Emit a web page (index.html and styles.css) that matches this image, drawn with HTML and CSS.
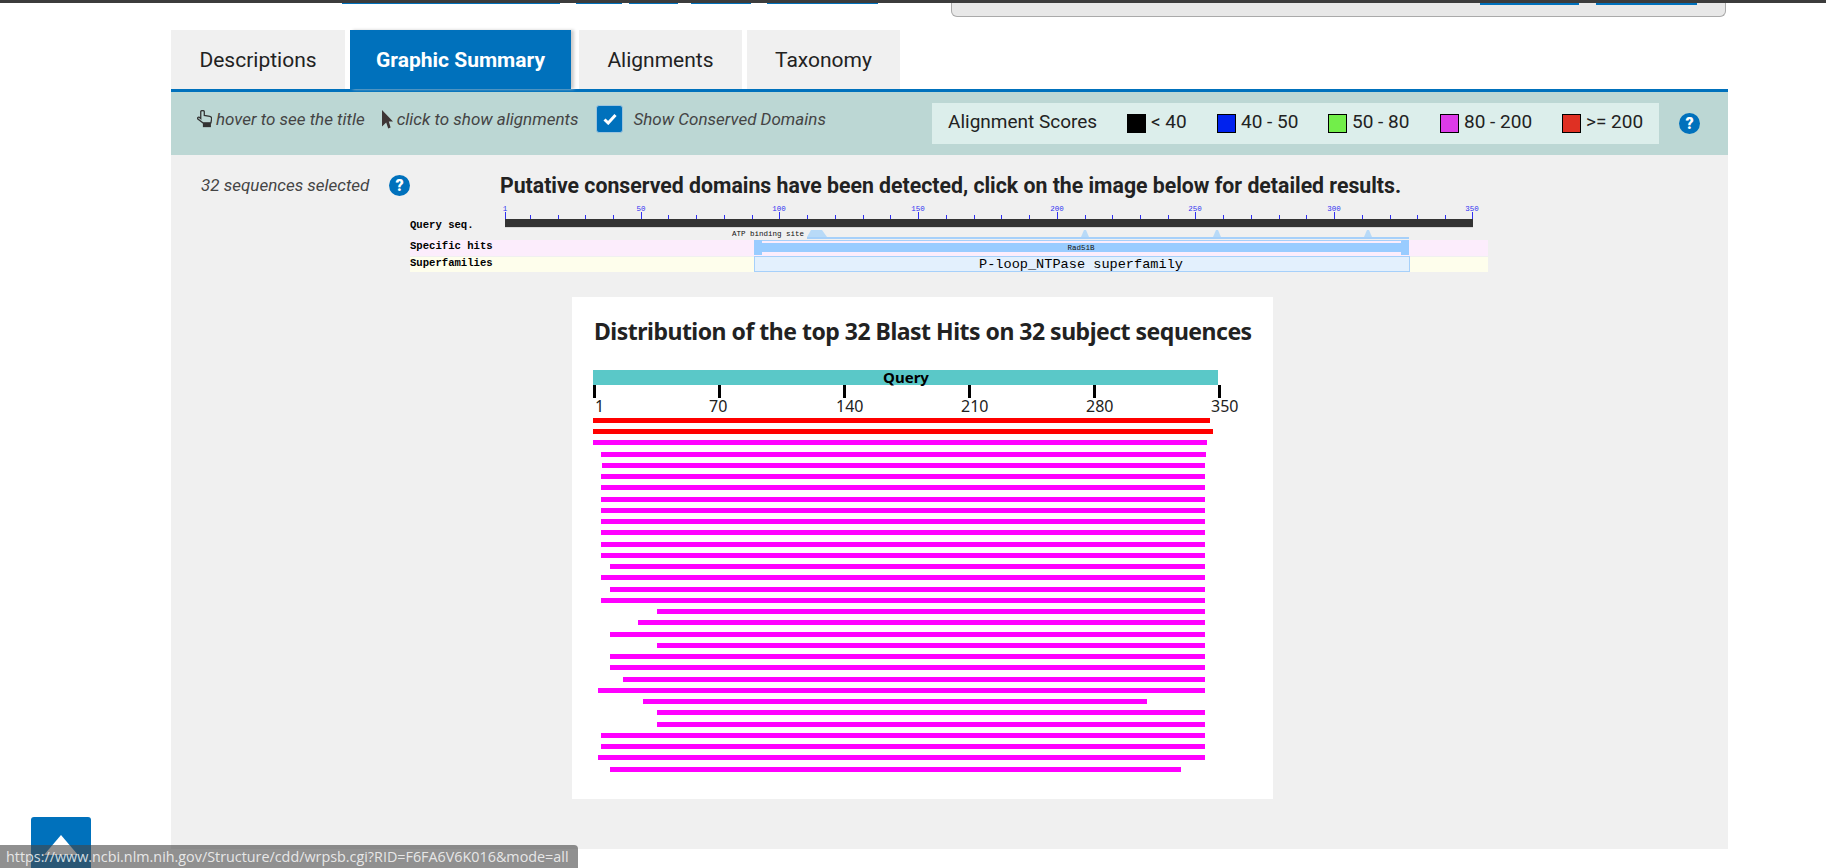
FILE: index.html
```html
<!DOCTYPE html>
<html>
  <head>
    <title>Graphic Summary</title>
    <link rel="stylesheet" href="styles.css">
  </head>
  <body>
    <header class="top">
      <div class="top-links">
        <span class="frag frag-a"></span>
        <span class="frag frag-b"></span>
        <span class="frag frag-c"></span>
        <span class="frag frag-d"></span>
        <span class="frag frag-e"></span>
      </div>
      <div class="top-box">
        <span class="frag frag-f"></span>
        <span class="frag frag-g"></span>
      </div>
    </header>

    <main class="results">
      <nav class="tabs">
        <a class="tab tab-desc" href="#">Descriptions</a>
        <a class="tab tab-graphic active" href="#">Graphic Summary</a>
        <a class="tab tab-align" href="#">Alignments</a>
        <a class="tab tab-tax" href="#">Taxonomy</a>
      </nav>

      <div class="toolbar">
        <div class="hints">
          <svg class="hand" width="15" height="18" viewBox="0 0 14 16.8">
            <path d="M3.5 8V1.5C3.5 .2 6.8 .2 6.8 1.5V5L12 6C13.4 6.3 13.8 7 13.6 8.5L13 12H5.5L.8 8.5C0 7.6 1 6.2 2.2 6.8Z" fill="none" stroke="#333" stroke-width="1.2"/>
            <rect x="5.5" y="12" width="7.5" height="4" fill="#333"/>
          </svg>
          <span class="hint hint-hover">hover to see the title</span>
          <svg class="arrow" width="11" height="19" viewBox="0 0 11 19">
            <path d="M0 0L11 11.5H6.8L8.6 17.5L6.2 18.6L4.2 12.6L0 16.5Z" fill="#3d3535"/>
          </svg>
          <span class="hint hint-click">click to show alignments</span>
          <span class="checkbox">
            <svg width="14" height="12" viewBox="0 0 14 12">
              <path d="M1.5 6.5L5.2 10L12.5 2" fill="none" stroke="#fff" stroke-width="3"/>
            </svg>
          </span>
          <span class="hint">Show Conserved Domains</span>
        </div>
        <div class="legend">
          <span class="legend-title">Alignment Scores</span>
          <span class="score score-first"><i class="swatch s-black"></i>&lt; 40</span>
          <span class="score"><i class="swatch s-blue"></i>40 - 50</span>
          <span class="score"><i class="swatch s-green"></i>50 - 80</span>
          <span class="score"><i class="swatch s-magenta"></i>80 - 200</span>
          <span class="score"><i class="swatch s-red"></i>&gt;= 200</span>
        </div>
        <span class="help help-legend">?</span>
      </div>

      <section class="summary">
        <div class="summary-head">
          <span class="selected">32 sequences selected</span>
          <span class="help help-selected">?</span>
          <h2 class="cdd-title">Putative conserved domains have been detected, click on the image below for detailed results.</h2>
        </div>

        <svg class="cdd" width="1100" height="75" viewBox="400 205 1100 75">
          <rect x="410" y="240" width="1078" height="16" fill="#fcedfc"/>
          <rect x="410" y="257" width="1078" height="15" fill="#fefeec"/>

          <rect x="505" y="227" width="968" height="1" fill="#d8d8d8"/>
          <rect x="505" y="219" width="968" height="8" fill="#333"/>
          <path class="tick" d="M505.5 212V219M530.5 215V219M558.5 215V219M585.5 215V219M613.5 215V219M641.5 212V219M668.5 215V219M696.5 215V219M724.5 215V219M752.5 215V219M779.5 212V219M807.5 215V219M835.5 215V219M863.5 215V219M890.5 215V219M918.5 212V219M946.5 215V219M974.5 215V219M1001.5 215V219M1029.5 215V219M1057.5 212V219M1085.5 215V219M1112.5 215V219M1140.5 215V219M1168.5 215V219M1195.5 212V219M1223.5 215V219M1251.5 215V219M1279.5 215V219M1306.5 215V219M1334.5 212V219M1362.5 215V219M1390.5 215V219M1417.5 215V219M1445.5 215V219M1472.5 212V219"/>
          <text class="ruler-num" x="505" y="211" text-anchor="middle">1</text>
          <text class="ruler-num" x="641" y="211" text-anchor="middle">50</text>
          <text class="ruler-num" x="779" y="211" text-anchor="middle">100</text>
          <text class="ruler-num" x="918" y="211" text-anchor="middle">150</text>
          <text class="ruler-num" x="1057" y="211" text-anchor="middle">200</text>
          <text class="ruler-num" x="1195" y="211" text-anchor="middle">250</text>
          <text class="ruler-num" x="1334" y="211" text-anchor="middle">300</text>
          <text class="ruler-num" x="1472" y="211" text-anchor="middle">350</text>

          <text class="cdd-label" x="410" y="228">Query seq.</text>
          <text class="cdd-label" x="410" y="249">Specific hits</text>
          <text class="cdd-label" x="410" y="266">Superfamilies</text>
          <text class="cdd-small" x="732" y="235.5">ATP binding site</text>

          <path class="site" d="M807 237L811 230H822L827 237Z"/>
          <path class="site" d="M1081 237L1084 230H1086L1089 237Z"/>
          <path class="site" d="M1213 237L1216 230H1218L1221 237Z"/>
          <path class="site" d="M1364 237L1367 230H1369L1372 237Z"/>
          <rect x="807" y="237" width="602" height="2" fill="#a6d0fa"/>

          <rect x="754" y="240" width="8" height="15" fill="#99ccff"/>
          <rect x="1401" y="240" width="8" height="15" fill="#99ccff"/>
          <rect x="762" y="243" width="640" height="9" fill="#99ccff"/>
          <rect x="762" y="240" width="640" height="1" fill="#a6d0fa"/>
          <text class="cdd-small" x="1081" y="249.5" text-anchor="middle">Rad51B</text>

          <rect x="754.5" y="256.5" width="655" height="15" fill="#e3f0fd" stroke="#a6d0fa"/>
          <text class="cdd-super" x="1081" y="268" text-anchor="middle">P-loop_NTPase superfamily</text>
        </svg>

        <div class="chart-card">
          <h3 class="chart-title">Distribution of the top 32 Blast Hits on 32 subject sequences</h3>
          <svg class="chart" width="701" height="432" viewBox="572 367 701 432">
            <rect x="593" y="370" width="625" height="15" fill="#5ac8c8"/>
            <text class="query" x="906" y="383" text-anchor="middle">Query</text>
            <path class="axis" d="M594.5 385V398M719.5 385V398M844.5 385V398M969.5 385V398M1094.5 385V398M1219.5 385V398"/>
            <text class="axis-num" x="595" y="412">1</text>
            <text class="axis-num" x="709" y="412">70</text>
            <text class="axis-num" x="836" y="412">140</text>
            <text class="axis-num" x="961" y="412">210</text>
            <text class="axis-num" x="1086" y="412">280</text>
            <text class="axis-num" x="1211" y="412">350</text>

            <g fill="#ff0000">
              <rect x="593" y="418" width="617" height="5"/>
              <rect x="593" y="429" width="620" height="5"/>
            </g>
            <g fill="#ff00ff">
              <rect x="593" y="440" width="614" height="5"/>
              <rect x="601" y="452" width="605" height="5"/>
              <rect x="602" y="463" width="603" height="5"/>
              <rect x="601" y="474" width="604" height="5"/>
              <rect x="601" y="485" width="604" height="5"/>
              <rect x="601" y="497" width="604" height="5"/>
              <rect x="601" y="508" width="604" height="5"/>
              <rect x="601" y="519" width="604" height="5"/>
              <rect x="601" y="530" width="604" height="5"/>
              <rect x="601" y="542" width="604" height="5"/>
              <rect x="601" y="553" width="604" height="5"/>
              <rect x="610" y="564" width="595" height="5"/>
              <rect x="601" y="575" width="604" height="5"/>
              <rect x="610" y="587" width="595" height="5"/>
              <rect x="601" y="598" width="604" height="5"/>
              <rect x="657" y="609" width="548" height="5"/>
              <rect x="638" y="620" width="567" height="5"/>
              <rect x="610" y="632" width="595" height="5"/>
              <rect x="657" y="643" width="548" height="5"/>
              <rect x="610" y="654" width="595" height="5"/>
              <rect x="610" y="665" width="595" height="5"/>
              <rect x="623" y="677" width="582" height="5"/>
              <rect x="598" y="688" width="607" height="5"/>
              <rect x="643" y="699" width="504" height="5"/>
              <rect x="657" y="710" width="548" height="5"/>
              <rect x="657" y="722" width="548" height="5"/>
              <rect x="601" y="733" width="604" height="5"/>
              <rect x="601" y="744" width="604" height="5"/>
              <rect x="598" y="755" width="607" height="5"/>
              <rect x="610" y="767" width="571" height="5"/>
            </g>
          </svg>
        </div>
      </section>
    </main>

    <a class="back-top" href="#"><i class="back-arrow"></i></a>
    <div class="status">https://www.ncbi.nlm.nih.gov/Structure/cdd/wrpsb.cgi?RID=F6FA6V6K016&amp;mode=all</div>
  </body>
</html>
```

FILE: styles.css
```css
html,
body {
  margin: 0;
  height: 868px;
  overflow: hidden;
  background-color: #fff;
}

body {
  font-family: "Roboto", sans-serif;
  color: #222;
}

/* what is left of the header after scrolling */
.top {
  display: flex;
  height: 27px;
  border-top: 3px solid #3c3c3c;
  box-sizing: content-box;
}

.top-links {
  display: flex;
  width: 951px;
  height: 1px;
}

.frag {
  display: block;
  height: 1px;
  background-color: #0071bc;
}

.frag-a {
  width: 218px;
  margin-left: 342px;
}
.frag-b {
  width: 46px;
  margin-left: 16px;
}
.frag-c {
  width: 49px;
  margin-left: 7px;
}
.frag-d {
  width: 60px;
  margin-left: 13px;
}
.frag-e {
  width: 111px;
  margin-left: 16px;
}

.top-box {
  display: flex;
  box-sizing: border-box;
  width: 775px;
  height: 14px;
  padding-left: 528px;
  background-color: #e8e8e8;
  border: 1px solid #aaa;
  border-top: 0;
  border-radius: 0 0 6px 6px;
}

.frag-f {
  width: 99px;
  height: 2px;
}
.frag-g {
  width: 101px;
  height: 2px;
  margin-left: 17px;
}

.results {
  width: 1557px;
  margin-left: 171px;
}

.tabs {
  display: flex;
  height: 59px;
}

.tab {
  display: flex;
  align-items: center;
  justify-content: center;
  background-color: #f0f0f0;
  color: #222;
  font-size: 21px;
  text-decoration: none;
}

.tab-desc {
  width: 174px;
  margin-right: 5px;
}
.tab-graphic {
  width: 221px;
  margin-right: 8px;
}
.tab-align {
  width: 163px;
  margin-right: 5px;
}
.tab-tax {
  width: 153px;
}

.tab.active {
  background-color: #0071bc;
  color: #fff;
  font-weight: 700;
  box-shadow: 3px 0 3px #ccc;
}

.toolbar {
  display: flex;
  align-items: center;
  box-sizing: border-box;
  height: 66px;
  padding: 7px 0 0 26px;
  background-color: #bcd7d4;
  border-top: 3px solid #0071bc;
}

.hints {
  display: flex;
  align-items: center;
  height: 28px;
  margin-top: -16px;
  width: 735px;
  color: #444;
  font-size: 17px;
  font-style: italic;
  white-space: nowrap;
}

.hand {
  margin-right: 4px;
}

.hint-hover {
  margin-right: 17px;
}

.arrow {
  margin-right: 4px;
}

.hint-click {
  margin-right: 18px;
}

.checkbox {
  display: flex;
  align-items: center;
  justify-content: center;
  width: 27px;
  height: 28px;
  margin-right: 10px;
  background-color: #0071bc;
  border: 1px solid #9cc4de;
  border-radius: 3px;
  box-sizing: border-box;
}

.legend {
  display: flex;
  align-items: center;
  box-sizing: border-box;
  width: 727px;
  height: 41px;
  margin-top: -7px;
  padding-left: 16px;
  background-color: #dceeeb;
  font-size: 19px;
}

.legend-title {
  width: 179px;
  margin-top: -4px;
}

.score {
  display: flex;
  align-items: flex-start;
  height: 22px;
  margin-top: -3px;
  line-height: 22px;
  white-space: nowrap;
}

.swatch {
  display: block;
  box-sizing: border-box;
  width: 19px;
  height: 19px;
  margin: 3px 5px 0 0;
  border: 1px solid #000;
}

.s-black {
  background-color: #000;
}
.s-blue {
  background-color: #0022ee;
}
.s-green {
  background-color: #72ee4a;
}
.s-magenta {
  background-color: #dd3be8;
}
.s-red {
  background-color: #df3023;
}

.score-first {
  width: 90px;
}
.score:nth-child(3) {
  width: 111px;
}
.score:nth-child(4) {
  width: 112px;
}
.score:nth-child(5) {
  width: 122px;
}

.help {
  display: inline-flex;
  align-items: center;
  justify-content: center;
  width: 21px;
  height: 21px;
  border-radius: 50%;
  background-color: #0071bc;
  color: #fff;
  font-size: 16px;
  font-weight: 900;
  font-style: normal;
}

.help-legend {
  margin: -7px 0 0 20px;
}

.summary {
  height: 694px;
  background-color: #f0f0f0;
}

.summary-head {
  display: flex;
  align-items: center;
  height: 50px;
  padding: 10px 0 0 30px;
  box-sizing: border-box;
}

.selected {
  width: 188px;
  color: #444;
  font-size: 17px;
  font-style: italic;
  white-space: nowrap;
}

.cdd-title {
  margin: 0 0 0 90px;
  font-size: 21.25px;
  font-weight: 700;
  white-space: nowrap;
}

.cdd {
  display: block;
  margin-left: 229px;
}

.ruler-num {
  fill: #3030f0;
  font: 7.5px "Liberation Mono", monospace;
}

.tick {
  stroke: #3030f0;
  stroke-width: 1;
}

.cdd-label {
  fill: #000;
  font: bold 10.6px "Liberation Mono", monospace;
}

.cdd-small {
  fill: #111;
  font: 7.5px "Liberation Mono", monospace;
}

.cdd-super {
  fill: #000;
  font: 13.6px "Liberation Mono", monospace;
}

.site {
  fill: #b8daf8;
}

.chart-card {
  box-sizing: border-box;
  width: 701px;
  height: 502px;
  margin: 17px 0 0 401px;
  background-color: #fff;
}

.chart-title {
  height: 70px;
  margin: 0;
  padding: 18px 0 0 22px;
  box-sizing: border-box;
  font-family: "Noto Sans", sans-serif;
  font-size: 23px;
  font-weight: 700;
  letter-spacing: -0.5px;
  line-height: 32px;
  white-space: nowrap;
}

.chart {
  display: block;
}

.query {
  fill: #000;
  font: 700 15px "Noto Sans", sans-serif;
}

.axis {
  stroke: #000;
  stroke-width: 3;
}

.axis-num {
  fill: #222;
  font: 16px "Noto Sans", sans-serif;
}

.back-top {
  position: absolute;
  left: 31px;
  top: 817px;
  display: flex;
  justify-content: center;
  width: 60px;
  height: 51px;
  background-color: #0071bc;
  border-radius: 3px 3px 0 0;
}

.back-arrow {
  display: block;
  width: 0;
  height: 0;
  margin-top: 18px;
  border-left: 17px solid transparent;
  border-right: 17px solid transparent;
  border-bottom: 20px solid #fff;
}

.status {
  position: absolute;
  left: 0;
  top: 845px;
  box-sizing: border-box;
  width: 578px;
  height: 23px;
  padding-left: 6px;
  background-color: rgba(70, 70, 70, 0.6);
  border-radius: 0 4px 0 0;
  color: rgba(255, 255, 255, 0.8);
  font-family: "Open Sans", sans-serif;
  font-size: 14.35px;
  line-height: 24px;
  white-space: nowrap;
}
```
